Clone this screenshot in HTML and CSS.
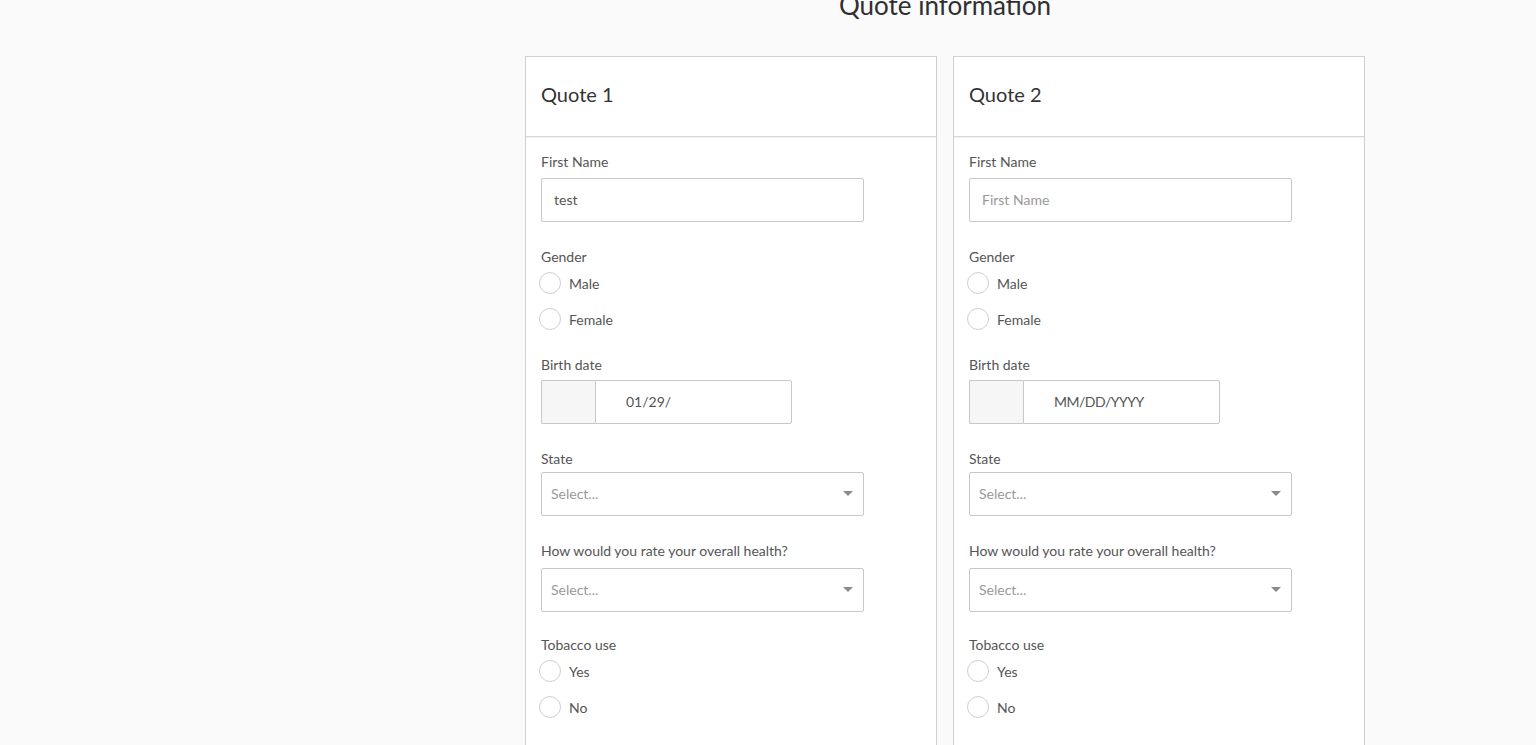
FILE: index.html
```html
<!DOCTYPE html>
<html>
<head>
<meta charset="utf-8">
<link rel="stylesheet" href="styles.css">
</head>
<body>
<div class="page">
  <h1 class="title">Quote information</h1>
  <div class="cards">
    <section class="card">
      <header class="card-head">Quote 1</header>
      <div class="card-body">
        <div class="field">
          <label class="label">First Name</label>
          <div class="input"><span class="value">test</span></div>
        </div>
        <div class="field">
          <label class="label">Gender</label>
          <div class="radios">
            <div class="radio"><span class="circle"></span><span>Male</span></div>
            <div class="radio"><span class="circle"></span><span>Female</span></div>
          </div>
        </div>
        <div class="field">
          <label class="label">Birth date</label>
          <div class="date">
            <div class="addon"></div>
            <div class="date-input"><span class="value">01/29/</span></div>
          </div>
        </div>
        <div class="field field-compact">
          <label class="label">State</label>
          <div class="input select"><span class="placeholder">Select...</span><span class="caret"></span></div>
        </div>
        <div class="field field-health">
          <label class="label">How would you rate your overall health?</label>
          <div class="input select"><span class="placeholder">Select...</span><span class="caret"></span></div>
        </div>
        <div class="field">
          <label class="label">Tobacco use</label>
          <div class="radios">
            <div class="radio"><span class="circle"></span><span>Yes</span></div>
            <div class="radio"><span class="circle"></span><span>No</span></div>
          </div>
        </div>
      </div>
    </section>
    <section class="card">
      <header class="card-head">Quote 2</header>
      <div class="card-body">
        <div class="field">
          <label class="label">First Name</label>
          <div class="input"><span class="placeholder">First Name</span></div>
        </div>
        <div class="field">
          <label class="label">Gender</label>
          <div class="radios">
            <div class="radio"><span class="circle"></span><span>Male</span></div>
            <div class="radio"><span class="circle"></span><span>Female</span></div>
          </div>
        </div>
        <div class="field">
          <label class="label">Birth date</label>
          <div class="date">
            <div class="addon"></div>
            <div class="date-input"><span class="value date-mask">MM/DD/YYYY</span></div>
          </div>
        </div>
        <div class="field field-compact">
          <label class="label">State</label>
          <div class="input select"><span class="placeholder">Select...</span><span class="caret"></span></div>
        </div>
        <div class="field field-health">
          <label class="label">How would you rate your overall health?</label>
          <div class="input select"><span class="placeholder">Select...</span><span class="caret"></span></div>
        </div>
        <div class="field">
          <label class="label">Tobacco use</label>
          <div class="radios">
            <div class="radio"><span class="circle"></span><span>Yes</span></div>
            <div class="radio"><span class="circle"></span><span>No</span></div>
          </div>
        </div>
      </div>
    </section>
  </div>
</div>
</body>
</html>
```

FILE: styles.css
```css
html, body {
  margin: 0;
  padding: 0;
  background: #fafafa;
  font-family: "Lato", "Open Sans", sans-serif;
  color: #555;
  overflow: hidden;
}

.page {
  width: 840px;
  margin: 0 0 0 525px;
}

.title {
  margin: -8px 0 0 0;
  height: 64px;
  font-size: 26px;
  line-height: 26px;
  font-weight: 400;
  color: #2f2f2f;
  text-align: center;
}

.cards {
  display: flex;
  gap: 16px;
  align-items: flex-start;
}

.card {
  width: 410px;
  background: #fff;
  border: 1px solid #d0d0d0;
  height: 720px;
}

.card-head {
  height: 80px;
  border-bottom: 1px solid #d6d6d6;
  box-shadow: 0 1px 1px rgba(0, 0, 0, 0.05);
  display: flex;
  align-items: center;
  padding: 0 0 6px 15px;
  box-sizing: border-box;
  font-size: 20px;
  color: #333;
}

.card-body {
  padding: 16px 15px 0 15px;
}

.field {
  margin-bottom: 26px;
}

.field-compact .select {
  margin-top: -3px;
}

.field-compact {
  margin-bottom: 26px;
}

.field-health .label {
  margin-bottom: 8px;
}

.field-health {
  margin-bottom: 24px;
}

.label {
  display: block;
  font-size: 14px;
  line-height: 18px;
  margin-bottom: 7px;
  color: #555;
}

.input {
  width: 323px;
  height: 44px;
  box-sizing: border-box;
  border: 1px solid #c8c8c8;
  border-radius: 2px;
  background: #fff;
  display: flex;
  align-items: center;
  padding: 0 0 1px 12px;
  font-size: 14px;
}

.value {
  color: #555;
  font-size: 14px;
}

.date-mask {
  letter-spacing: -0.5px;
}

.placeholder {
  color: #999;
  font-size: 14px;
}

.select {
  padding-left: 9px;
  padding-right: 10px;
  padding-bottom: 2px;
  justify-content: space-between;
}

.caret {
  width: 0;
  height: 0;
  border-left: 5px solid transparent;
  border-right: 5px solid transparent;
  border-top: 5px solid #8a8a8a;
}

.radios {
  display: flex;
  flex-direction: column;
  gap: 14px;
  margin-left: -2px;
  margin-top: -1px;
}

.radio {
  display: flex;
  align-items: center;
  gap: 8px;
  font-size: 14px;
  color: #555;
  height: 22px;
}

.circle {
  width: 22px;
  height: 22px;
  box-sizing: border-box;
  border: 1px solid #cfcfcf;
  border-radius: 50%;
  background: #fff;
}

.date {
  display: flex;
  height: 44px;
  margin-top: -1px;
}

.addon {
  width: 54px;
  box-sizing: border-box;
  background: #f6f6f6;
  border: 1px solid #c8c8c8;
  border-right: none;
  border-radius: 2px 0 0 2px;
}

.date-input {
  width: 197px;
  box-sizing: border-box;
  border: 1px solid #c8c8c8;
  border-radius: 0 2px 2px 0;
  display: flex;
  align-items: center;
  padding: 0 0 1px 30px;
}
```
